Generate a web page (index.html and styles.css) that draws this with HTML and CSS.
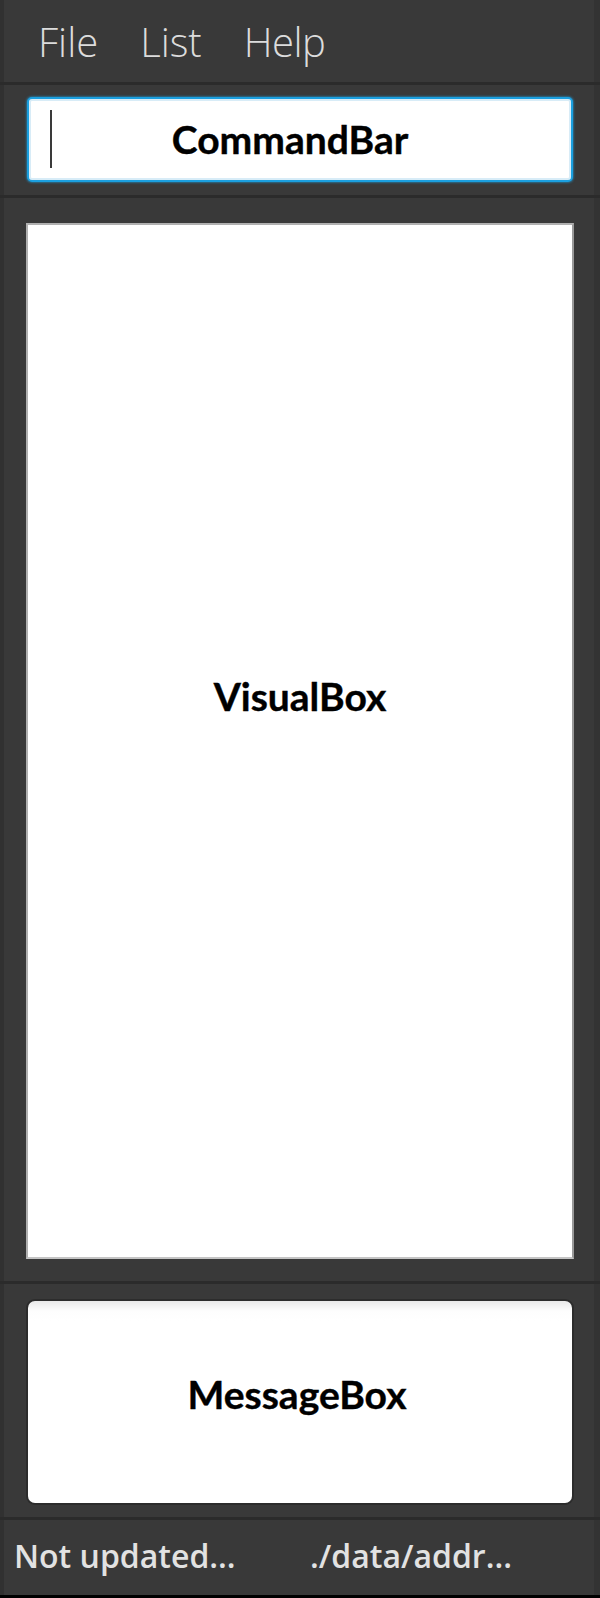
FILE: index.html
```html
<!DOCTYPE html>
<html lang="en">
<head>
<meta charset="utf-8">
<title>App</title>
<link rel="stylesheet" href="styles.css">
</head>
<body>
<div class="app">
  <nav class="menubar">
    <span class="menu-item">File</span>
    <span class="menu-item">List</span>
    <span class="menu-item">Help</span>
  </nav>
  <section class="panel cmd-panel">
    <div class="cmd-input">
      <span class="caret"></span>
      <span class="label">CommandBar</span>
    </div>
  </section>
  <section class="panel visual-panel">
    <div class="visual-box">
      <span class="label">VisualBox</span>
    </div>
  </section>
  <section class="panel message-panel">
    <div class="message-box">
      <span class="label">MessageBox</span>
    </div>
  </section>
  <footer class="statusbar">
    <span class="status-cell">Not updated...</span>
    <span class="status-cell second">./data/addr...</span>
  </footer>
</div>
</body>
</html>
```
FILE: styles.css
```css
* { box-sizing: border-box; }
html, body { margin: 0; padding: 0; }
body {
  width: 600px;
  height: 1598px;
  background: #383838;
  overflow: hidden;
}
.app {
  width: 600px;
  height: 1598px;
  display: flex;
  flex-direction: column;
  background: #393939;
  box-shadow: inset 4px 0 0 #313131, inset -6px 0 0 #333333;
}
.menubar {
  height: 85px;
  display: flex;
  align-items: center;
  padding: 1px 0 0 38px;
  gap: 42px;
  border-bottom: 3px solid #2b2b2b;
}
.menu-item {
  font-family: "Open Sans", "Noto Sans", sans-serif;
  font-weight: 300;
  font-size: 40px;
  color: #dcdcdc;
  line-height: 1;
}
.menu-item:nth-child(3) { letter-spacing: -0.5px; }
.panel {
  border-bottom: 3px solid #2b2b2b;
}
.label {
  font-family: Lato, "Open Sans", sans-serif;
  font-weight: 700;
  font-size: 39px;
  color: #000;
  line-height: 1;
  -webkit-text-stroke: 0.4px #000;
}
.cmd-panel {
  height: 113px;
  padding: 12px 27px 0 27px;
}
.cmd-input {
  position: relative;
  height: 85px;
  background: #fff;
  border: 2px solid #1b9fdf;
  border-radius: 5px;
  box-shadow: inset 0 0 0 2px #d8ecf7, 0 0 2px 1px rgba(27,159,223,0.5);
  display: flex;
  align-items: center;
  justify-content: center;
  padding-right: 20px;
}
.caret {
  position: absolute;
  left: 21px;
  top: 11px;
  width: 2px;
  height: 58px;
  background: #3a3a3a;
}
.visual-panel {
  height: 1086px;
  padding: 25px 26px 0 26px;
}
.visual-box {
  height: 1036px;
  background: #fff;
  border: 2px solid #b0b0b0;
  border-right-color: #9a9a9a;
  border-bottom-color: #c4c4c4;
  display: flex;
  align-items: center;
  justify-content: center;
  padding-bottom: 90px;
}
.message-panel {
  height: 236px;
  padding: 17px 28px 0 28px;
}
.message-box {
  height: 202px;
  background: linear-gradient(#e9e9e9, #fdfdfd 10px, #fff 20px);
  border-radius: 7px;
  box-shadow: 0 0 0 2px #2c2c2c;
  display: flex;
  align-items: center;
  justify-content: center;
  padding-bottom: 16px;
  padding-right: 6px;
}
.statusbar {
  height: 78px;
  display: grid;
  grid-template-columns: 296px 1fr;
  align-items: center;
  padding: 0 0 3px 14px;
  border-bottom: 3px solid #000;
}
.status-cell {
  font-family: "Open Sans", "Noto Sans", sans-serif;
  font-weight: 600;
  font-size: 32px;
  color: #e2e2e2;
  line-height: 1;
  white-space: nowrap;
}
```
